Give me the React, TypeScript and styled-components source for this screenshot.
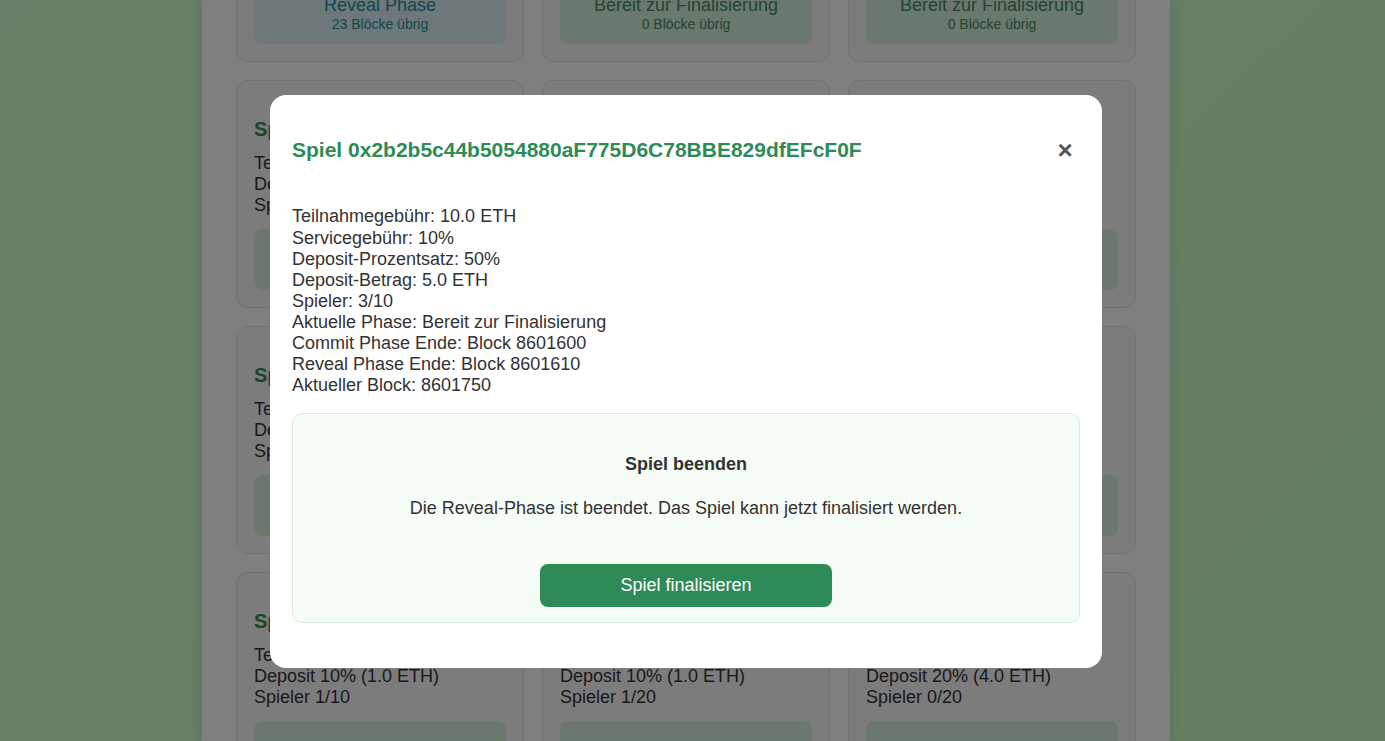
import React from 'react';
import styled, { createGlobalStyle } from 'styled-components';

const GlobalStyle = createGlobalStyle`
  html, body {
    margin: 0;
    padding: 0;
    height: 100%;
    overflow: hidden;
  }
  body {
    font-family: "Liberation Sans", Arial, sans-serif;
    color: #333;
    background: linear-gradient(135deg, #d4ffd2 0%, #c8fdc4 100%);
  }
  * { box-sizing: border-box; }
`;

const Page = styled.div`
  display: flex;
  justify-content: center;
  padding-right: 13px;
  height: 100vh;
  overflow: hidden;
`;

const Container = styled.main`
  width: 968px;
  height: 100%;
  background: #fefefc;
  padding: 0 34px;
  box-shadow: 0 0 12px rgba(0, 0, 0, 0.12);
  display: flex;
  flex-direction: column;
`;

const Grid = styled.div`
  display: grid;
  grid-template-columns: repeat(3, 288px);
  column-gap: 18px;
  row-gap: 18px;
  margin-top: -166px;
`;

const Card = styled.div`
  height: 228px;
  background: #f9f9f8;
  border: 1px solid #e2e2e0;
  border-radius: 12px;
  padding: 17px;
  display: flex;
  flex-direction: column;
`;

const CardTitle = styled.h3`
  margin: 20px 0 12px;
  font-size: 20px;
  line-height: 23px;
  font-weight: bold;
  color: #2e8b57;
  white-space: nowrap;
  overflow: hidden;
`;

const CardLine = styled.div`
  font-size: 18px;
  line-height: 21px;
  color: #333;
  white-space: nowrap;
`;

const Status = styled.div<{ $variant: 'reveal' | 'done'; $compact?: boolean }>`
  margin-top: auto;
  border-radius: 8px;
  padding: ${(p) => (p.$compact ? '13px 10px 12px' : '20px 10px')};
  text-align: center;
  background: ${(p) => (p.$variant === 'reveal' ? '#dcf0f5' : '#d6f0da')};
  color: ${(p) => (p.$variant === 'reveal' ? '#1f8fa3' : '#4a8a62')};
`;

const StatusTitle = styled.div`
  font-size: 18px;
  line-height: 21px;
`;

const StatusSub = styled.div`
  font-size: 14px;
  line-height: 16px;
`;

const Overlay = styled.div`
  position: fixed;
  inset: 0;
  background: rgba(0, 0, 0, 0.5);
  display: flex;
  justify-content: center;
  align-items: center;
  padding: 22px 13px 0 0;
`;

const Modal = styled.div`
  width: 832px;
  background: #ffffff;
  border-radius: 16px;
  padding: 22px;
`;

const ModalHeader = styled.div`
  display: flex;
  justify-content: space-between;
  align-items: center;
`;

const ModalTitle = styled.h2`
  margin: 21px 0;
  font-size: 21px;
  line-height: 24px;
  font-weight: bold;
  color: #2e8b57;
`;

const CloseButton = styled.button`
  width: 30px;
  height: 30px;
  padding: 0;
  border: none;
  background: none;
  font-family: "Liberation Sans", Arial, sans-serif;
  font-size: 26px;
  font-weight: bold;
  line-height: 1;
  color: #555;
  cursor: pointer;
`;

const Info = styled.div`
  margin-top: 23px;
  font-size: 18px;
  line-height: 21.125px;
  color: #333;
`;

const ActionBox = styled.div`
  margin: 16px 0 23px;
  background: #f5fdf6;
  border: 1px solid #d7eed9;
  border-radius: 10px;
  padding: 21px 20px 15px;
  display: flex;
  flex-direction: column;
  align-items: center;
  text-align: center;
`;

const ActionTitle = styled.h3`
  margin: 19px 0 0;
  font-size: 18px;
  line-height: 21px;
  font-weight: bold;
  color: #333;
`;

const ActionText = styled.p`
  margin: 23px 0 0;
  font-size: 18px;
  line-height: 21px;
  color: #333;
`;

const PrimaryButton = styled.button`
  margin-top: 45px;
  width: 292px;
  height: 43px;
  padding: 1px 0 0;
  border: none;
  border-radius: 8px;
  background: #2e8b57;
  color: #ffffff;
  font-family: "Liberation Sans", Arial, sans-serif;
  font-size: 18px;
  cursor: pointer;
`;

type Game = {
  id: string;
  fee: string;
  deposit: string;
  players: string;
  phase: string;
  blocks?: string;
  variant: 'reveal' | 'done';
};

const games: Game[] = [
  { id: '0x7a1c...9A0b', fee: '5.0 ETH', deposit: 'Deposit 10% (0.5 ETH)', players: 'Spieler 2/10', phase: 'Reveal Phase', blocks: '23 Blöcke übrig', variant: 'reveal' },
  { id: '0x2b2b...cF0F', fee: '10.0 ETH', deposit: 'Deposit 50% (5.0 ETH)', players: 'Spieler 3/10', phase: 'Bereit zur Finalisierung', blocks: '0 Blöcke übrig', variant: 'done' },
  { id: '0x9F3e...8e9F', fee: '2.0 ETH', deposit: 'Deposit 20% (0.4 ETH)', players: 'Spieler 4/20', phase: 'Bereit zur Finalisierung', blocks: '0 Blöcke übrig', variant: 'done' },
  { id: '0x4c8D...c9D', fee: '10.0 ETH', deposit: 'Deposit 10% (1.0 ETH)', players: 'Spieler 2/10', phase: 'Beendet', variant: 'done' },
  { id: '0x1E5f...3E7f', fee: '1.0 ETH', deposit: 'Deposit 50% (0.5 ETH)', players: 'Spieler 5/10', phase: 'Beendet', variant: 'done' },
  { id: '0x6A0b...8A2b', fee: '3.0 ETH', deposit: 'Deposit 30% (0.9 ETH)', players: 'Spieler 1/20', phase: 'Beendet', variant: 'done' },
  { id: '0x8B2c...0B4c', fee: '4.0 ETH', deposit: 'Deposit 25% (1.0 ETH)', players: 'Spieler 3/10', phase: 'Beendet', variant: 'done' },
  { id: '0x3D7e...5D9e', fee: '6.0 ETH', deposit: 'Deposit 10% (0.6 ETH)', players: 'Spieler 2/20', phase: 'Beendet', variant: 'done' },
  { id: '0x5F9a...7F1a', fee: '8.0 ETH', deposit: 'Deposit 20% (1.6 ETH)', players: 'Spieler 6/10', phase: 'Beendet', variant: 'done' },
  { id: '0x0A4b...6C0d', fee: '10.0 ETH', deposit: 'Deposit 10% (1.0 ETH)', players: 'Spieler 1/10', phase: 'Beitreten', variant: 'done' },
  { id: '0xC2d6...0C4d', fee: '10.0 ETH', deposit: 'Deposit 10% (1.0 ETH)', players: 'Spieler 1/20', phase: 'Beitreten', variant: 'done' },
  { id: '0xE4f8...2E6f', fee: '20.0 ETH', deposit: 'Deposit 20% (4.0 ETH)', players: 'Spieler 0/20', phase: 'Beitreten', variant: 'done' },
];

const details = [
  'Teilnahmegebühr: 10.0 ETH',
  'Servicegebühr: 10%',
  'Deposit-Prozentsatz: 50%',
  'Deposit-Betrag: 5.0 ETH',
  'Spieler: 3/10',
  'Aktuelle Phase: Bereit zur Finalisierung',
  'Commit Phase Ende: Block 8601600',
  'Reveal Phase Ende: Block 8601610',
  'Aktueller Block: 8601750',
];

export default function App() {
  return (
    <>
      <GlobalStyle />
      <Page>
        <Container>
          <Grid>
            {games.map((g) => (
              <Card key={g.id}>
                <CardTitle>Spiel {g.id}</CardTitle>
                <CardLine>Teilnahme {g.fee}</CardLine>
                <CardLine>{g.deposit}</CardLine>
                <CardLine>{g.players}</CardLine>
                <Status $variant={g.variant} $compact={Boolean(g.blocks)}>
                  <StatusTitle>{g.phase}</StatusTitle>
                  {g.blocks && <StatusSub>{g.blocks}</StatusSub>}
                </Status>
              </Card>
            ))}
          </Grid>
        </Container>
      </Page>
      <Overlay>
        <Modal>
          <ModalHeader>
            <ModalTitle>Spiel 0x2b2b5c44b5054880aF775D6C78BBE829dfEFcF0F</ModalTitle>
            <CloseButton aria-label="Schließen">×</CloseButton>
          </ModalHeader>
          <Info>
            {details.map((d) => (
              <div key={d}>{d}</div>
            ))}
          </Info>
          <ActionBox>
            <ActionTitle>Spiel beenden</ActionTitle>
            <ActionText>Die Reveal-Phase ist beendet. Das Spiel kann jetzt finalisiert werden.</ActionText>
            <PrimaryButton>Spiel finalisieren</PrimaryButton>
          </ActionBox>
        </Modal>
      </Overlay>
    </>
  );
}
